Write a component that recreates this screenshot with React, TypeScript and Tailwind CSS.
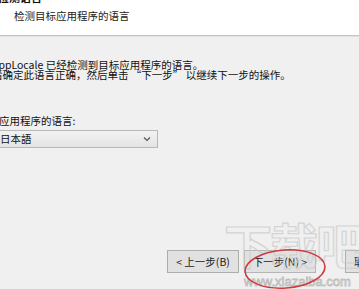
const CJK = "font-['Noto_Sans_CJK_SC','Noto_Sans',sans-serif]";

function WizardButton({ children, className = "" }: { children: React.ReactNode; className?: string }) {
  return (
    <div
      className={`flex h-[23px] w-[72px] shrink-0 items-center justify-center whitespace-nowrap border border-[#adadad] bg-[#e1e1e1] text-[10.5px] text-[#222] ${className}`}
    >
      {children}
    </div>
  );
}

export default function App() {
  return (
    <div className={`relative h-[289px] w-[359px] overflow-hidden bg-[#f0f0f0] ${CJK}`}>
      {/* header */}
      <div className="flex h-[35px] flex-col bg-white pl-[14px]">
        <p className="-mt-[10px] -ml-[16px] text-[11px] font-bold leading-[14px] text-[#111]">检测语言</p>
        <p className="mt-[6px] text-[10.5px] leading-[12px] text-[#222]">检测目标应用程序的语言</p>
      </div>
      <div className="h-px bg-[#c4c4c4]" />
      <div className="h-px bg-[#e2e2e2]" />

      {/* body */}
      <div className="-ml-[8px] pt-[23px] text-[10.5px] leading-[10px] text-[#111]">
        <p className="whitespace-nowrap">AppLocale 已经检测到目标应用程序的语言。</p>
        <p className="whitespace-nowrap">请确定此语言正确，然后单击 “下一步” 以继续下一步的操作。</p>
      </div>

      <p className="-ml-[22px] mt-[35px] whitespace-nowrap text-[10.5px] leading-[12px] text-[#111]">选择应用程序的语言:</p>

      <div className="-ml-[4px] mt-[3px] flex h-[18px] w-[162px] items-center justify-between border border-[#b8b8b8] bg-gradient-to-b from-[#f2f2f2] to-[#e4e4e4] pl-[3px] pr-[6px] text-[10.5px] text-[#111]">
        <span>日本語</span>
        <svg width="8" height="6" viewBox="0 0 8 6" className="text-[#555]">
          <path d="M1 1.5 L4 4.5 L7 1.5" fill="none" stroke="currentColor" strokeWidth="1.2" />
        </svg>
      </div>

      {/* buttons */}
      <div className="mt-[102px] flex pl-[167px]">
        <WizardButton>&lt; 上一步(B)</WizardButton>
        <WizardButton className="ml-[5px] border-[#b5b5b5]">下一步(N) &gt;</WizardButton>
        <WizardButton className="ml-[29px] justify-start pl-[8px]">取消</WizardButton>
      </div>

      {/* watermark */}
      <div className="pointer-events-none absolute left-[224px] top-[218px] whitespace-nowrap text-[48px] font-bold leading-[50px] tracking-[-2px] text-transparent opacity-70 [-webkit-text-stroke:1.2px_#c9c9c9]">
        下载吧
      </div>
      <div className="pointer-events-none absolute left-[244px] top-[275px] whitespace-nowrap font-['Liberation_Sans',sans-serif] text-[13px] leading-[14px] text-transparent [-webkit-text-stroke:0.8px_#bdbdbd]">
        www.xiazaiba.com
      </div>

      {/* red annotation ellipse */}
      <svg className="pointer-events-none absolute left-[240px] top-[247px]" width="90" height="44" viewBox="0 0 90 44">
        <ellipse cx="45" cy="22" rx="40" ry="19" fill="none" stroke="#d0393d" strokeWidth="1.6" transform="rotate(-4 45 22)" />
      </svg>
    </div>
  );
}
